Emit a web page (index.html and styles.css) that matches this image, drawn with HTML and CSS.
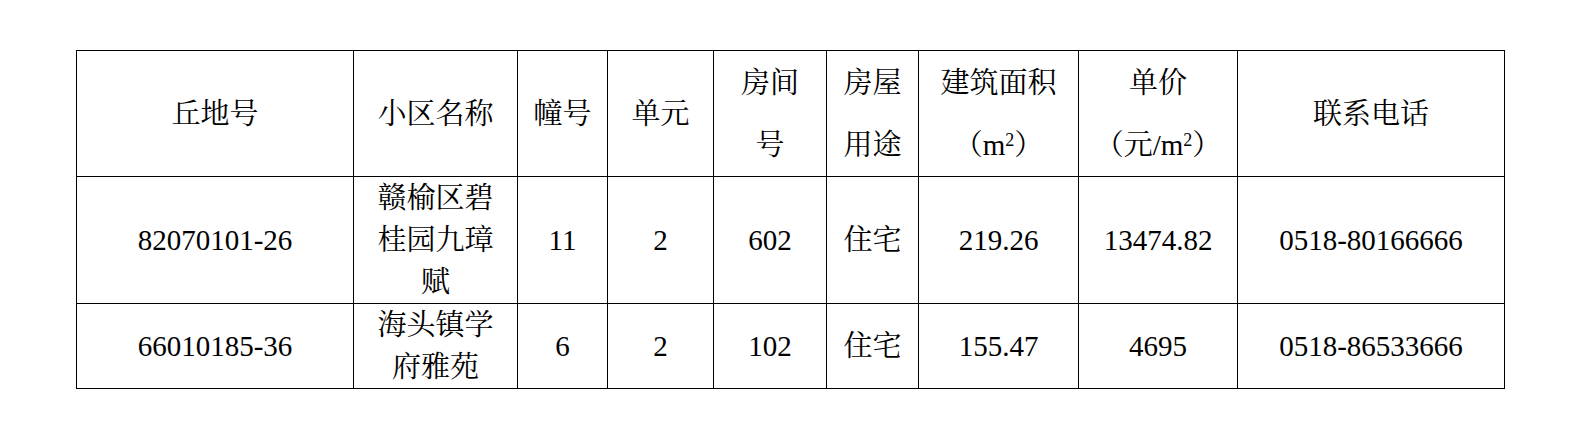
FILE: index.html
```html
<!DOCTYPE html>
<html lang="zh-CN">
<head>
<meta charset="utf-8">
<title>房源信息表</title>
<link rel="stylesheet" href="styles.css">
</head>
<body>
<div class="page">
  <table class="grid">
    <colgroup>
      <col class="c1"><col class="c2"><col class="c3"><col class="c4"><col class="c5">
      <col class="c6"><col class="c7"><col class="c8"><col class="c9">
    </colgroup>
    <thead>
      <tr class="head">
        <th>丘地号</th>
        <th>小区名称</th>
        <th>幢号</th>
        <th>单元</th>
        <th>房间<br>号</th>
        <th>房屋<br>用途</th>
        <th>建筑面积<br>（m<sup>2</sup>）</th>
        <th>单价<br>（元/m<sup>2</sup>）</th>
        <th>联系电话</th>
      </tr>
    </thead>
    <tbody>
      <tr>
        <td>82070101-26</td>
        <td>赣榆区碧<br>桂园九璋<br>赋</td>
        <td>11</td>
        <td>2</td>
        <td>602</td>
        <td>住宅</td>
        <td>219.26</td>
        <td>13474.82</td>
        <td>0518-80166666</td>
      </tr>
      <tr>
        <td>66010185-36</td>
        <td>海头镇学<br>府雅苑</td>
        <td>6</td>
        <td>2</td>
        <td>102</td>
        <td>住宅</td>
        <td>155.47</td>
        <td>4695</td>
        <td>0518-86533666</td>
      </tr>
    </tbody>
  </table>
</div>
</body>
</html>
```

FILE: styles.css
```css
html, body {
  margin: 0;
  padding: 0;
  background: #ffffff;
}

.page {
  padding: 50px 0 0 76px;
}

.grid {
  border-collapse: collapse;
  table-layout: fixed;
  width: 1429px;
  font-family: "Liberation Serif", "Noto Serif CJK SC", "Noto Sans CJK SC", serif;
  font-size: 29px;
  color: #000000;
}

.c1 { width: 277px; }
.c2 { width: 164px; }
.c3 { width: 90px; }
.c4 { width: 106px; }
.c5 { width: 113px; }
.c6 { width: 92px; }
.c7 { width: 160px; }
.c8 { width: 159px; }
.c9 { width: 267px; }

.grid th,
.grid td {
  border: 1px solid #000000;
  padding: 0;
  text-align: center;
  vertical-align: middle;
  font-weight: normal;
  line-height: 42px;
  white-space: nowrap;
}

.grid .head th {
  height: 125px;
  line-height: 62px;
}

.grid sup {
  font-size: 18px;
  line-height: 0;
  vertical-align: 9px;
}
```
